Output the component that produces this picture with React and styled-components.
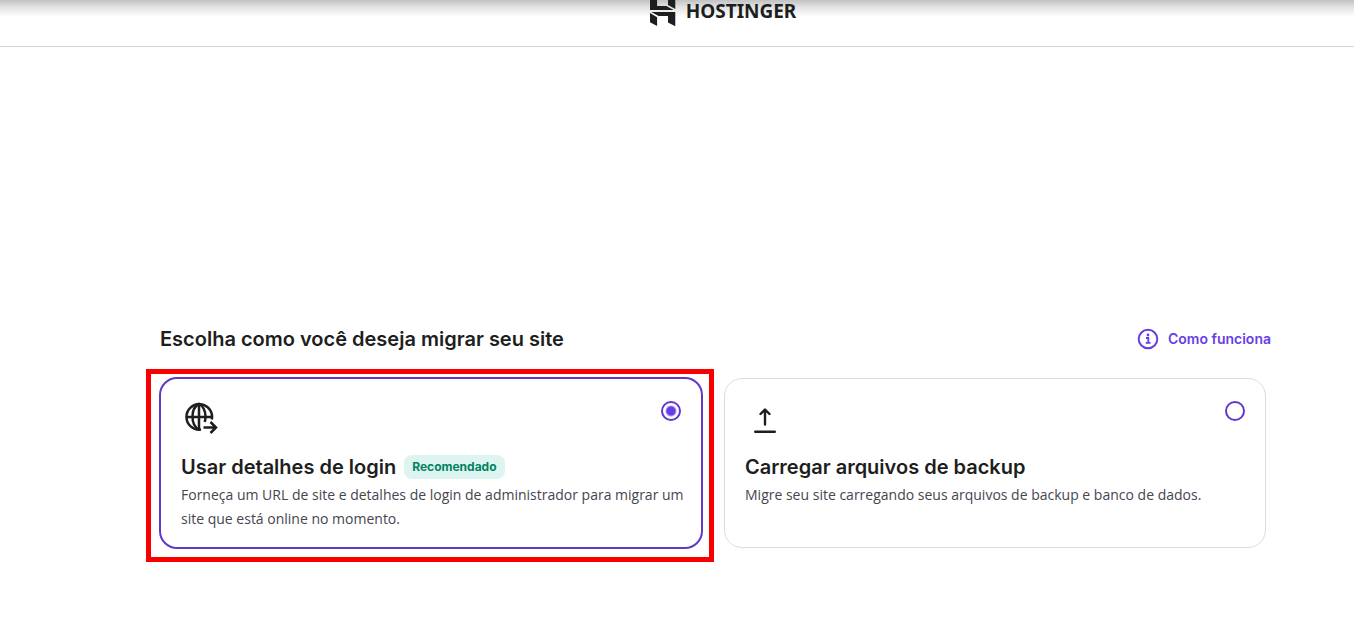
// App.jsx
import React, { useState } from 'react';
import styled, { createGlobalStyle } from 'styled-components';

const GlobalStyle = createGlobalStyle`
  * {
    box-sizing: border-box;
  }

  body {
    margin: 0;
    background-color: #fff;
    color: #1d1e20;
    font-family: Inter, 'Open Sans', sans-serif;
  }
`;

const Header = styled.header`
  display: flex;
  justify-content: center;
  height: 47px;
  padding-left: 92px;
  border-bottom: 1px solid #d5d5d5;
  background: linear-gradient(#c2c2c2, #e2e2e2 7px, #fff 17px);
`;

const Logo = styled.a`
  display: flex;
  align-items: flex-start;
  gap: 10px;
  color: #1d1e20;
  text-decoration: none;
`;

const LogoMark = styled.svg`
  width: 26px;
  height: 27px;
`;

const LogoText = styled.span`
  font-family: 'Noto Sans', sans-serif;
  font-size: 19px;
  font-weight: 700;
  line-height: 22px;
`;

const Main = styled.main`
  padding: 280px 88px 40px 160px;
`;

const TitleRow = styled.div`
  display: flex;
  align-items: center;
  justify-content: space-between;
  height: 24px;
  margin-bottom: 27px;
`;

const Title = styled.h1`
  margin: 0;
  font-size: 20px;
  font-weight: 600;
  line-height: 24px;
`;

const HelpButton = styled.button`
  display: flex;
  align-items: center;
  gap: 8px;
  margin-right: -5px;
  padding: 0;
  border: none;
  background: none;
  color: #673de6;
  font-family: inherit;
  font-size: 14px;
  font-weight: 600;
  line-height: 24px;
  cursor: pointer;
`;

const Options = styled.div`
  display: grid;
  grid-template-columns: 1fr 1fr;
  gap: 22px;
`;

const OptionWrap = styled.div`
  display: grid;
  position: relative;
`;

const Highlight = styled.div`
  position: absolute;
  inset: -9px -12px -14px -14px;
  border: 5px solid #f80000;
  pointer-events: none;
`;

const Card = styled.label`
  display: block;
  margin: ${props => (props.$selected ? '-1px' : '0')};
  padding: 20px 12px 16px 20px;
  border: ${props => (props.$selected ? '2px solid #6039cc' : '1px solid #dadce0')};
  border-radius: 18px;
  cursor: pointer;
`;

const CardTop = styled.div`
  display: flex;
  align-items: flex-start;
  justify-content: space-between;
  margin-bottom: 16px;
`;

const Radio = styled.input`
  appearance: none;
  width: 20px;
  height: 20px;
  margin: 2px 8px 0 0;
  border: 2px solid #6039cc;
  border-radius: 50%;
  cursor: pointer;

  &:checked {
    background: radial-gradient(circle, #673de6 4px, #fff 6px);
  }
`;

const CardTitleRow = styled.div`
  display: flex;
  align-items: center;
  gap: 8px;
  margin-bottom: 4px;
`;

const CardTitle = styled.h2`
  margin: 0;
  font-size: 20px;
  font-weight: 600;
  line-height: 24px;
`;

const Badge = styled.span`
  padding: 0 8px;
  border-radius: 8px;
  background-color: #def4f0;
  color: #008361;
  font-size: 12px;
  font-weight: 700;
  line-height: 24px;
`;

const Description = styled.p`
  margin: 0;
  color: #45454f;
  font-family: 'Open Sans', sans-serif;
  font-size: 14px;
  line-height: 24px;
`;

const GlobeIcon = () => (
  <svg width="40" height="40" viewBox="0 0 40 40" fill="none" stroke="#1d1e20" strokeWidth="2.5" aria-hidden="true">
    <path d="M20 30.600A12.800 12.800 0 1 1 30.800 20.500" />
    <path d="M18 5v26M5.500 18h26" />
    <path d="M18 30.600C13.800 28.500 11.500 23.500 11.500 17.800S13.800 7 18 5c4.200 2.100 6.500 7.100 6.500 13 0 1.500-.2 3-.8 5" />
    <path d="M22.500 28.500h12.500M29.500 23l5.500 5.500-5.500 5.500" />
  </svg>
);

const UploadIcon = () => (
  <svg width="40" height="40" viewBox="0 0 40 40" fill="none" stroke="#1d1e20" strokeWidth="2.4" strokeLinecap="round" strokeLinejoin="round" aria-hidden="true">
    <path d="M20 25.500V11M15.500 15L20 10.500l4.500 4.500M10.200 32.800h19.600" />
  </svg>
);

const InfoIcon = () => (
  <svg width="24" height="24" viewBox="0 0 24 24" fill="none" stroke="#673de6" strokeWidth="2" aria-hidden="true">
    <circle cx="12" cy="12" r="9.300" />
    <path d="M10 11h2.300v4.700M9.800 15.800h4.700" strokeWidth="1.800" />
    <circle cx="12" cy="8" r="1.400" fill="#673de6" stroke="none" />
  </svg>
);

const options = [
  {
    id: 'login',
    title: 'Usar detalhes de login',
    badge: 'Recomendado',
    description: 'Forneça um URL de site e detalhes de login de administrador para migrar um site que está online no momento.',
    Icon: GlobeIcon,
    highlighted: true,
  },
  {
    id: 'backup',
    title: 'Carregar arquivos de backup',
    description: 'Migre seu site carregando seus arquivos de backup e banco de dados.',
    Icon: UploadIcon,
  },
];

const App = () => {
  const [selected, setSelected] = useState('login');

  return (
    <>
      <GlobalStyle />
      <Header>
        <Logo href="#">
          <LogoMark viewBox="0 4 26 27" fill="currentColor" aria-hidden="true">
            <path d="M0 14.050V0l7.090 3.780v6.180h9.290l7.210 4.090zM18.010 8.930V0l7.270 3.680v9.350zM18.010 26.390v-6.300l-9.360-.01-7.330-4.080 23.960.12v14.060zM0 26.220v-9.180l7.090 4.130v8.730z" />
          </LogoMark>
          <LogoText>HOSTINGER</LogoText>
        </Logo>
      </Header>
      <Main>
        <TitleRow>
          <Title>Escolha como você deseja migrar seu site</Title>
          <HelpButton type="button">
            <InfoIcon />
            Como funciona
          </HelpButton>
        </TitleRow>
        <Options>
          {options.map(({ id, title, badge, description, Icon, highlighted }) => (
            <OptionWrap key={id}>
              <Card htmlFor={id} $selected={selected === id}>
                <CardTop>
                  <Icon />
                  <Radio
                    type="radio"
                    id={id}
                    name="migration"
                    checked={selected === id}
                    onChange={() => setSelected(id)}
                  />
                </CardTop>
                <CardTitleRow>
                  <CardTitle>{title}</CardTitle>
                  {badge && <Badge>{badge}</Badge>}
                </CardTitleRow>
                <Description>{description}</Description>
              </Card>
              {highlighted && <Highlight />}
            </OptionWrap>
          ))}
        </Options>
      </Main>
    </>
  );
};

export default App;
